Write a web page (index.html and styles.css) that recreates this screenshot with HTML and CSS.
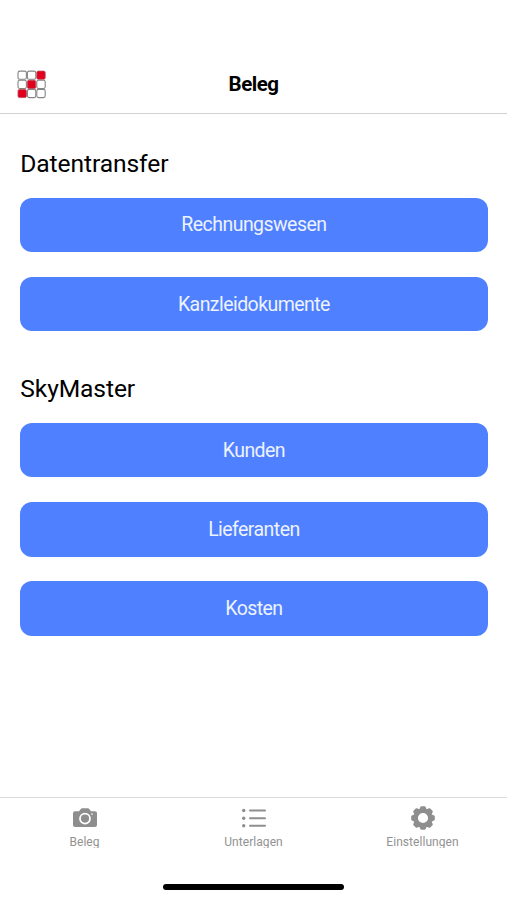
FILE: index.html
```html
<!DOCTYPE html>
<html lang="de">
<head>
  <meta charset="UTF-8">
  <meta name="viewport" content="width=device-width, initial-scale=1.0">
  <title>Beleg</title>
  <link rel="stylesheet" href="styles.css">
</head>
<body>

  <!-- Header -->
  <header class="header">
    <svg class="logo" viewBox="0 0 29 29">
      <g class="logo-empty">
        <rect x="1" y="1.1" width="8.4" height="8.2" rx="1.8" />
        <rect x="10.4" y="1.1" width="8.4" height="8.2" rx="1.8" />
        <rect x="1" y="10.3" width="8.4" height="8.2" rx="1.8" />
        <rect x="19.8" y="10.3" width="8.4" height="8.2" rx="1.8" />
        <rect x="10.4" y="19.4" width="8.4" height="8.2" rx="1.8" />
        <rect x="19.8" y="19.4" width="8.4" height="8.2" rx="1.8" />
      </g>
      <g class="logo-filled">
        <rect x="19.8" y="1.1" width="8.4" height="8.2" rx="1.5" />
        <rect x="10.4" y="10.3" width="8.4" height="8.2" rx="1.5" />
        <rect x="1" y="19.4" width="8.4" height="8.2" rx="1.5" />
      </g>
    </svg>
    <h1>Beleg</h1>
  </header>

  <!-- Content -->
  <main class="content">
    <section class="group">
      <h2>Datentransfer</h2>
      <button type="button">Rechnungswesen</button>
      <button type="button">Kanzleidokumente</button>
    </section>
    <section class="group">
      <h2>SkyMaster</h2>
      <button type="button">Kunden</button>
      <button type="button">Lieferanten</button>
      <button type="button">Kosten</button>
    </section>
  </main>

  <!-- Tab bar -->
  <nav class="tabs">
    <a class="tab">
      <svg viewBox="0 0 28 28">
        <path fill-rule="evenodd" d="M4 7.2H8L10 4.7Q10.4 4.2 11 4.2H17Q17.6 4.2 18 4.7L20 7.2H24Q26 7.2 26 9.2V21Q26 23 24 23H4Q2 23 2 21V9.2Q2 7.2 4 7.2ZM14 8.7A5.9 5.9 0 1 0 14 20.5A5.9 5.9 0 1 0 14 8.7ZM14 10.5A4.1 4.1 0 1 1 14 18.7A4.1 4.1 0 1 1 14 10.5ZM21 9.3A.8.8 0 1 0 21 10.9A.8.8 0 1 0 21 9.3Z" />
      </svg>
      <span>Beleg</span>
    </a>
    <a class="tab">
      <svg viewBox="0 0 28 28">
        <circle cx="3.7" cy="6.5" r="1.7" />
        <circle cx="3.7" cy="14.2" r="1.7" />
        <circle cx="3.7" cy="21.7" r="1.7" />
        <rect x="9" y="5.5" width="17" height="2" rx="1" />
        <rect x="9" y="13.2" width="17" height="2" rx="1" />
        <rect x="9" y="20.7" width="17" height="2" rx="1" />
      </svg>
      <span>Unterlagen</span>
    </a>
    <a class="tab">
      <svg viewBox="0 0 28 28">
        <g transform="translate(14 14)">
          <circle r="7.3" fill="none" stroke="#8e8e8e" stroke-width="4.4" />
          <g id="teeth">
            <path id="tooth" d="M-3.8 -8.3L-2.6 -11.1Q-2.3 -11.8 -1.6 -11.8H1.6Q2.3 -11.8 2.6 -11.1L3.8 -8.3Z" />
            <use href="#tooth" transform="rotate(45)" />
            <use href="#tooth" transform="rotate(90)" />
            <use href="#tooth" transform="rotate(135)" />
          </g>
          <use href="#teeth" transform="rotate(180)" />
        </g>
      </svg>
      <span>Einstellungen</span>
    </a>
  </nav>

  <div class="home-indicator"></div>

</body>
</html>
```
FILE: styles.css
```css
* {
  box-sizing: border-box;
}

body {
  font-family: Roboto, sans-serif;
  background-color: #fff;
  color: #000;
  margin: 0;
  height: 900px;
  display: flex;
  flex-direction: column;
  overflow: hidden;
}

.header {
  height: 114px;
  padding: 55px 17px 0;
  border-bottom: 1px solid #d2d2d2;
  display: grid;
  grid-template-columns: 29px 1fr 29px;
  align-items: center;
}

.header h1 {
  margin: 0;
  text-align: center;
  font-size: 20.5px;
  font-weight: 700;
  letter-spacing: -0.5px;
}

.logo {
  width: 29px;
  height: 29px;
}

.logo-empty {
  fill: #fff;
  stroke: #858585;
  stroke-width: 1.1;
}

.logo-filled {
  fill: #e2001f;
  stroke: #b84b58;
  stroke-width: 0.8;
}

.content {
  flex: 1;
  padding: 34.9px 19.5px 0 20.3px;
}

.group {
  display: flex;
  flex-direction: column;
  gap: 24.7px;
  margin-bottom: 42.6px;
}

.group h2 {
  margin: 0 0 -6px;
  font-size: 24.6px;
  font-weight: 400;
  line-height: 30px;
  letter-spacing: -0.1px;
}

.group button {
  height: 54.6px;
  padding: 0;
  border: none;
  border-radius: 12px;
  background-color: #4f80ff;
  color: #edf2ff;
  font-family: inherit;
  font-size: 19.5px;
  letter-spacing: -0.55px;
}

.tabs {
  height: 51px;
  border-top: 1px solid #dcdcdc;
  display: grid;
  grid-template-columns: repeat(3, 1fr);
}

.tab {
  display: flex;
  flex-direction: column;
  align-items: center;
  padding-top: 6px;
  color: #929292;
}

.tab svg {
  width: 28px;
  height: 28px;
  fill: #8e8e8e;
}

/* the label box cuts the descenders */
.tab span {
  height: 13px;
  margin-top: 3px;
  font-size: 12px;
  line-height: 14px;
  letter-spacing: 0.05px;
  overflow: hidden;
}

.home-indicator {
  width: 181px;
  height: 6px;
  margin: 36px auto 10px;
  border-radius: 3px;
  background-color: #000;
}
```
